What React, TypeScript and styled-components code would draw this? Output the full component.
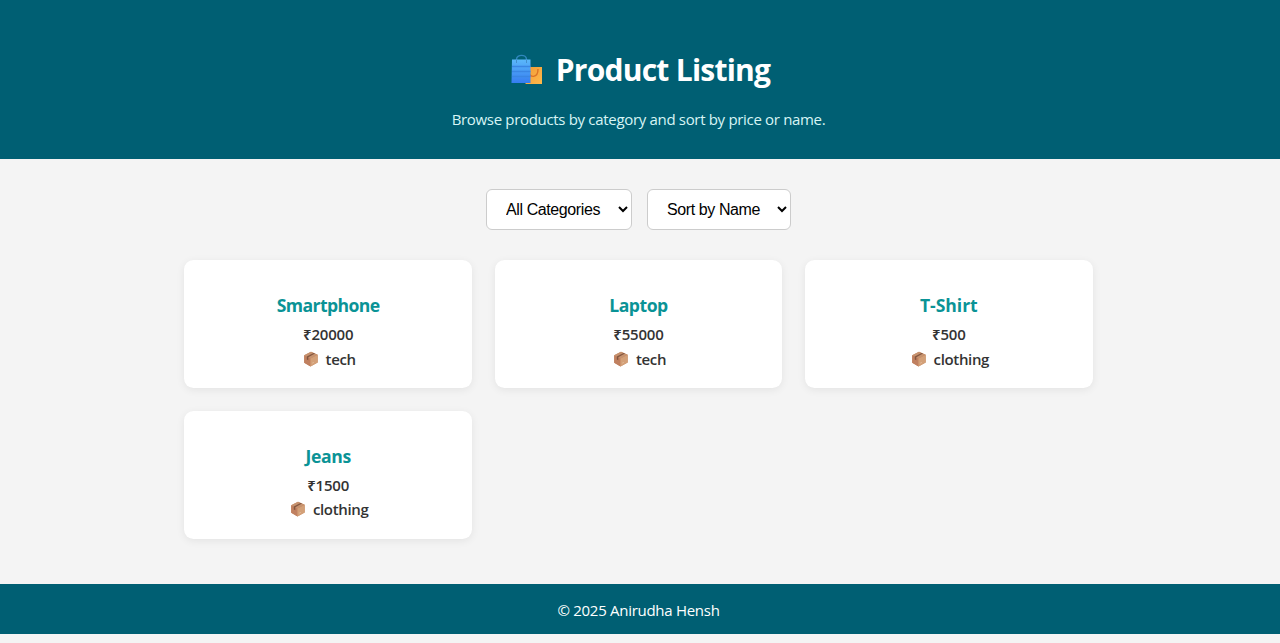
import React from 'react';
import styled, { createGlobalStyle } from 'styled-components';

const GlobalStyle = createGlobalStyle`
  * { box-sizing: border-box; }
  body {
    margin: 0;
    background: #f4f4f4;
    font-family: "Open Sans", "Noto Sans", sans-serif;
    color: #333;
  }
`;

const Page = styled.div`
  display: flex;
  flex-direction: column;
  height: 643px;
  overflow: hidden;
`;

const Header = styled.header`
  height: 158.6px;
  flex: none;
  padding: 48px 3px 0 0;
  background: #005f73;
  display: flex;
  flex-direction: column;
  align-items: center;
`;

const Title = styled.h1`
  margin: 0;
  padding-left: 4px;
  height: 43px;
  display: flex;
  align-items: center;
  gap: 14px;
  color: #fff;
  font-size: 30px;
  font-weight: 700;
  line-height: 43px;
  letter-spacing: -0.75px;
  white-space: nowrap;
`;

const Subtitle = styled.p`
  margin: 17px 0 0;
  color: #d8f5f5;
  font-size: 15px;
  line-height: 22px;
  letter-spacing: -0.32px;
  white-space: nowrap;
`;

const Main = styled.main`
  flex: none;
  height: 425.6px;
  padding: 30px 3px 0 0;
  display: flex;
  flex-direction: column;
  align-items: center;
`;

const Filters = styled.div`
  display: flex;
  gap: 15px;
  margin-bottom: 30.6px;
`;

const Select = styled.select<{ $width: number }>`
  width: ${({ $width }) => $width}px;
  height: 41px;
  padding: 0 0 0 15px;
  border: 1px solid #ccc;
  border-radius: 6px;
  background: #fff;
  color: #000;
  font-family: "Liberation Sans", Arial, sans-serif;
  font-size: 16px;
  letter-spacing: -0.4px;
`;

const Grid = styled.div`
  width: 908.5px;
  display: grid;
  grid-template-columns: repeat(3, 1fr);
  gap: 22.5px;
`;

const Card = styled.article`
  height: 128px;
  padding-top: 32px;
  border-radius: 9.5px;
  background: #fff;
  box-shadow: 0 2px 8px rgba(0, 0, 0, 0.07);
  display: flex;
  flex-direction: column;
  align-items: center;
`;

const Name = styled.h3<{ $tracking: number }>`
  margin: 0 0 4px;
  color: #0a9396;
  font-size: 17.6px;
  font-weight: 700;
  line-height: 26px;
  letter-spacing: ${({ $tracking }) => $tracking}px;
`;

const Detail = styled.p`
  margin: 0;
  font-size: 15px;
  font-weight: 600;
  line-height: 24.5px;
  letter-spacing: -0.2px;
`;

const Category = styled(Detail)`
  padding-left: 2px;
  display: flex;
  align-items: center;
  gap: 7px;
  letter-spacing: -0.35px;
`;

const Footer = styled.footer`
  height: 50px;
  flex: none;
  padding: 2px 3px 0 0;
  background: #005f73;
  color: #fff;
  display: flex;
  align-items: center;
  justify-content: center;
  font-size: 15px;
  letter-spacing: -0.28px;
`;

const BagsIcon = () => (
  <svg width="31" height="31" viewBox="0 0 31 31" fill="none">
    <defs>
      <linearGradient id="bag" x1="0" y1="0" x2="0" y2="1">
        <stop stopColor="#5bb8fb" />
        <stop offset="1" stopColor="#367df0" />
      </linearGradient>
      <linearGradient id="small-bag" x1="0" y1="0" x2="1" y2="1">
        <stop stopColor="#f09a35" />
        <stop offset="1" stopColor="#ffb94c" />
      </linearGradient>
    </defs>
    <path d="M5.5 6V5.500C5.500 0 15.500 0 15.500 5.500V6" stroke="#2f87bd" strokeWidth="1.400" />
    <path d="M15.500 13H31V30H14.500Z" fill="url(#small-bag)" />
    <path d="M27 15C27 24.500 18 24.500 18 17" stroke="#dc7226" strokeWidth="1.400" />
    <path d="M1 5.500H19.500V29H0.500Z" fill="url(#bag)" />
    <path d="M1 12.500H19.500M1 17.500H19.500M1 22.500H19.500" stroke="#3a86e4" strokeWidth="1.300" />
    <path d="M5.500 5.500V9M15.500 5.500V9" stroke="#438fcf" />
  </svg>
);

const BoxIcon = () => (
  <svg width="16" height="16" viewBox="0 0 16 16">
    <path d="M8 .7 14.700 3.800V11.600L7.500 15.400 1.200 11.700V4.200Z" fill="#c58860" />
    <path d="M1.200 4.200 7.500 7.400V15.400L1.200 11.700Z" fill="#c08060" />
    <path d="M7.500 7.400 14.700 3.800V11.600L7.500 15.400Z" fill="#d3a078" />
    <path d="M1.200 4.200 8 .7 14.700 3.800 7.500 7.400Z" fill="#c6926f" />
    <path d="M3.800 5.500 10.500 1.900 12 2.600 5.300 6.300V9.300L3.800 8.400Z" fill="#83563f" />
    <path d="M9 12.300 11 11.300" stroke="#e5bd99" strokeWidth=".8" />
  </svg>
);

const products = [
  { name: 'Smartphone', price: 20000, category: 'tech', tracking: -0.6 },
  { name: 'Laptop', price: 55000, category: 'tech', tracking: -0.5 },
  { name: 'T-Shirt', price: 500, category: 'clothing', tracking: -0.05 },
  { name: 'Jeans', price: 1500, category: 'clothing', tracking: -0.35 },
];

export default function App() {
  return (
    <>
      <GlobalStyle />
      <Page>
        <Header>
          <Title><BagsIcon /><span>Product Listing</span></Title>
          <Subtitle>Browse products by category and sort by price or name.</Subtitle>
        </Header>
        <Main>
          <Filters>
            <Select $width={146}><option>All Categories</option></Select>
            <Select $width={144}><option>Sort by Name</option></Select>
          </Filters>
          <Grid>
            {products.map((p) => (
              <Card key={p.name}>
                <Name $tracking={p.tracking}>{p.name}</Name>
                <Detail>₹{p.price}</Detail>
                <Category><BoxIcon /><span>{p.category}</span></Category>
              </Card>
            ))}
          </Grid>
        </Main>
        <Footer>© 2025 Anirudha Hensh</Footer>
      </Page>
    </>
  );
}
